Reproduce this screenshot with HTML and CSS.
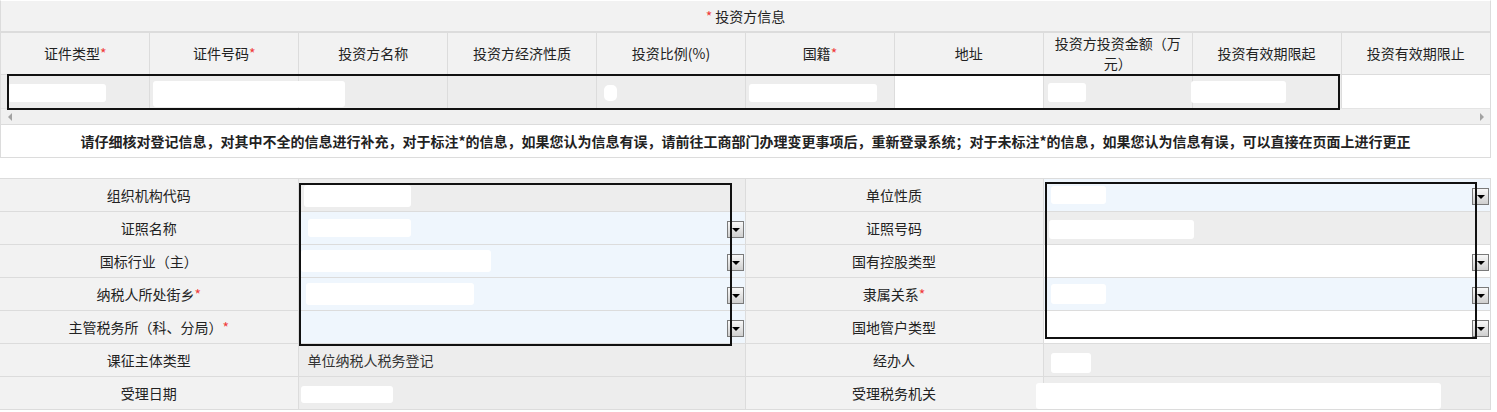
FILE: index.html
```html
<!DOCTYPE html>
<html lang="zh-CN">
<head>
    <meta charset="UTF-8">
    <title>投资方信息</title>
    <link rel="stylesheet" href="styles.css">
</head>
<body>

<div class="page">
    <div class="inv">
        <div class="inv-title"><span class="req">*</span> 投资方信息</div>
        <table class="grid">
            <tr>
                <th>证件类型<span class="req">*</span></th>
                <th>证件号码<span class="req">*</span></th>
                <th>投资方名称</th>
                <th>投资方经济性质</th>
                <th>投资比例(%)</th>
                <th>国籍<span class="req">*</span></th>
                <th>地址</th>
                <th>投资方投资金额（万元）</th>
                <th>投资有效期限起</th>
                <th>投资有效期限止</th>
            </tr>
            <tr>
                <td><span class="blob b1"></span></td>
                <td><span class="blob b2"></span></td>
                <td></td>
                <td></td>
                <td><span class="blob b3"></span></td>
                <td><span class="blob b4"></span></td>
                <td class="blank"></td>
                <td><span class="blob b5"></span></td>
                <td><span class="blob b6"></span></td>
                <td class="blank"></td>
            </tr>
        </table>
        <div class="hscroll">
            <span class="arrow-l"></span>
            <span class="arrow-r"></span>
        </div>
        <div class="redact r-inv"></div>
    </div>

    <div class="notice">请仔细核对登记信息，对其中不全的信息进行补充，对于标注*的信息，如果您认为信息有误，请前往工商部门办理变更事项后，重新登录系统；对于未标注*的信息，如果您认为信息有误，可以直接在页面上进行更正</div>

    <div class="form">
        <table class="ftable">
            <colgroup>
                <col class="c-label">
                <col class="c-val">
                <col class="c-label">
                <col class="c-val">
            </colgroup>
            <tr>
                <td class="label">组织机构代码</td>
                <td class="val"><span class="blob f1"></span></td>
                <td class="label">单位性质</td>
                <td class="val blue"><div class="field"><span class="blob f2"></span><span class="drop"></span></div></td>
            </tr>
            <tr>
                <td class="label">证照名称</td>
                <td class="val blue"><div class="field"><span class="blob f3"></span><span class="drop"></span></div></td>
                <td class="label">证照号码</td>
                <td class="val"><span class="blob f4"></span></td>
            </tr>
            <tr>
                <td class="label">国标行业（主）</td>
                <td class="val blue"><div class="field"><span class="blob f5"></span><span class="drop"></span></div></td>
                <td class="label">国有控股类型</td>
                <td class="val white"><div class="field"><span></span><span class="drop"></span></div></td>
            </tr>
            <tr>
                <td class="label">纳税人所处街乡<span class="req">*</span></td>
                <td class="val blue"><div class="field"><span class="blob f6"></span><span class="drop"></span></div></td>
                <td class="label">隶属关系<span class="req">*</span></td>
                <td class="val blue"><div class="field"><span class="blob f7"></span><span class="drop"></span></div></td>
            </tr>
            <tr>
                <td class="label">主管税务所（科、分局）<span class="req">*</span></td>
                <td class="val blue"><div class="field"><span></span><span class="drop"></span></div></td>
                <td class="label">国地管户类型</td>
                <td class="val white"><div class="field"><span></span><span class="drop"></span></div></td>
            </tr>
            <tr>
                <td class="label">课征主体类型</td>
                <td class="val text">单位纳税人税务登记</td>
                <td class="label">经办人</td>
                <td class="val"><span class="blob f8"></span></td>
            </tr>
            <tr>
                <td class="label">受理日期</td>
                <td class="val"><span class="blob f9"></span></td>
                <td class="label">受理税务机关</td>
                <td class="val"><span class="blob f10"></span></td>
            </tr>
        </table>
        <div class="redact r-left"></div>
        <div class="redact r-right"></div>
    </div>
</div>

</body>
</html>
```

FILE: styles.css
```css
* {
    margin: 0;
    padding: 0;
    box-sizing: border-box;
}

body {
    font-family: "Noto Sans CJK SC", "Microsoft YaHei", sans-serif;
    font-size: 14px;
    color: #222;
    background: #fff;
}

.page {
    width: 1491px;
}

.req {
    color: #f03c3c;
}

/* investor block */
.inv {
    position: relative;
    border: 1px solid #dcdcdc;
    border-top-color: #fff;
}

.inv-title {
    height: 32px;
    line-height: 31px;
    text-align: center;
    background: #f2f2f2;
    border-bottom: 2px solid #dcdcdc;
}

.grid {
    width: 100%;
    border-collapse: collapse;
    table-layout: fixed;
}

.grid th {
    height: 41px;
    padding: 0 8px;
    font-weight: normal;
    line-height: 20px;
    background: #f2f2f2;
    border-right: 1px solid #dcdcdc;
    border-bottom: 1px solid #dcdcdc;
}

.grid td {
    height: 34px;
    padding: 0 3px;
    background: #ededed;
    border-right: 1px solid #dcdcdc;
    vertical-align: middle;
    white-space: nowrap;
}

.grid th:last-child,
.grid td:last-child {
    border-right: none;
}

.grid td.blank {
    background: #fff;
}

.hscroll {
    height: 16px;
    display: flex;
    justify-content: space-between;
    align-items: center;
    padding: 0 6px 0 7px;
    background: #f0f0f0;
    border-top: 1px solid #e4e4e4;
}

.arrow-l {
    width: 0;
    height: 0;
    border-top: 4px solid transparent;
    border-bottom: 4px solid transparent;
    border-right: 4px solid #a3a3a3;
}

.arrow-r {
    width: 0;
    height: 0;
    border-top: 4px solid transparent;
    border-bottom: 4px solid transparent;
    border-left: 4px solid #a3a3a3;
}

/* redacted areas */
.blob {
    display: inline-block;
    background: #fff;
    border-radius: 3px;
    vertical-align: middle;
}

.b1 { width: 98px; height: 18px; margin-left: 4px; }
.b2 { width: 192px; height: 26px; margin-top: 6px; }
.b3 { width: 13px; height: 16px; margin-left: 4px; border-radius: 5px; }
.b4 { width: 128px; height: 18px; }
.b5 { width: 38px; height: 19px; margin-left: 1px; }
.b6 { width: 95px; height: 22px; margin-left: -5px; }

.redact {
    position: absolute;
    border: 2px solid #111;
}

.r-inv {
    left: 6px;
    top: 73px;
    width: 1333px;
    height: 36px;
}

/* notice */
.notice {
    height: 33px;
    display: flex;
    align-items: center;
    justify-content: center;
    font-weight: bold;
    color: #222;
    border: 1px solid #dcdcdc;
    border-top: none;
    margin-bottom: 20px;
}

/* form */
.form {
    position: relative;
}

.ftable {
    width: 1490px;
    border-collapse: collapse;
    table-layout: fixed;
    border-top: 1px solid #dcdcdc;
}

.c-label {
    width: 298px;
}

.c-val {
    width: 447px;
}

.ftable td {
    height: 33px;
    border-bottom: 1px solid #dcdcdc;
    border-right: 1px solid #dcdcdc;
    vertical-align: middle;
}

.ftable td.label {
    text-align: center;
    background: #f2f2f2;
}

.ftable td.val {
    padding: 0 1px 0 5px;
    background: #ededed;
}

.ftable td.blue {
    background: #eff6fd;
}

.ftable td.white {
    background: #fff;
}

.ftable td.text {
    padding-left: 9px;
    color: #333;
}

.field {
    display: flex;
    justify-content: space-between;
    align-items: center;
}

.drop {
    position: relative;
    width: 17px;
    height: 17px;
    margin-top: 2px;
    border: 1px solid #7a7a7a;
    background: linear-gradient(#f8f8f8, #cfcfcf);
}

.drop::after {
    content: "";
    position: absolute;
    left: 4px;
    top: 6px;
    border-left: 4px solid transparent;
    border-right: 4px solid transparent;
    border-top: 4px solid #000;
}

.f1 { width: 107px; height: 22px; }
.f2 { width: 55px; height: 18px; margin-left: 2px; }
.f3 { width: 103px; height: 18px; margin-left: 4px; }
.f4 { width: 145px; height: 19px; }
.f5 { width: 190px; height: 22px; margin-left: -3px; }
.f6 { width: 168px; height: 22px; margin-left: 2px; }
.f7 { width: 55px; height: 20px; margin-left: 2px; }
.f8 { width: 40px; height: 20px; margin-left: 2px; margin-top: 6px; }
.f9 { width: 92px; height: 17px; margin-left: -3px; }
.f10 { width: 405px; height: 26px; margin-left: -13px; margin-top: 6px; }

.r-left {
    left: 299px;
    top: 5px;
    width: 433px;
    height: 163px;
}

.r-right {
    left: 1045px;
    top: 4px;
    width: 432px;
    height: 157px;
}
```
